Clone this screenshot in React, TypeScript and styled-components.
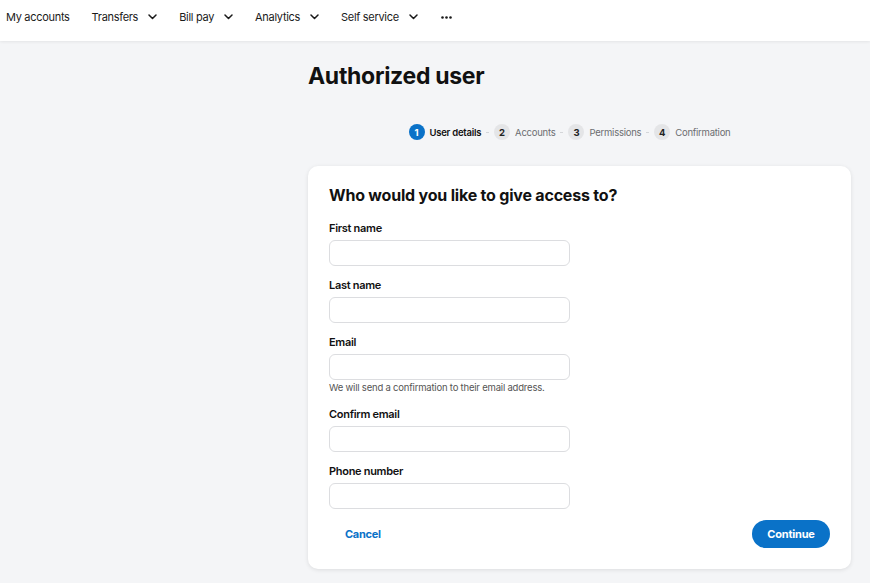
import React from "react";
import styled, { createGlobalStyle } from "styled-components";

const Global = createGlobalStyle`
  html, body { margin: 0; padding: 0; }
  body {
    background: #f4f5f7;
    font-family: Inter, "Noto Sans", sans-serif;
    color: #111;
    -webkit-font-smoothing: antialiased;
  }
  * { box-sizing: border-box; }
`;

const Page = styled.div`
  min-height: 583px;
  display: flex;
  flex-direction: column;
`;

const NavBar = styled.nav`
  height: 41px;
  background: #fff;
  display: flex;
  align-items: center;
  padding: 0 0 7px 6px;
  gap: 22px;
  box-shadow: 0 1px 3px rgba(0, 0, 0, 0.07);
`;

const NavItem = styled.div<{ $extra?: boolean }>`
  display: flex;
  align-items: center;
  gap: 10px;
  font-size: 11px;
  letter-spacing: -0.3px;
  line-height: 14px;
  color: #1a1a1a;
  margin-left: ${(p) => (p.$extra ? "1px" : "0")};
`;

const Main = styled.main`
  padding: 21px 19px 0 308px;
  display: flex;
  flex-direction: column;
`;

const Title = styled.h1`
  margin: 0;
  font-size: 23px;
  font-weight: 700;
  letter-spacing: -0.3px;
  line-height: 29px;
`;

const Stepper = styled.div`
  display: flex;
  align-items: center;
  justify-content: center;
  padding-right: 20px;
  margin-top: 33px;
  gap: 5px;
`;

const Step = styled.div`
  display: flex;
  align-items: center;
  gap: 5px;
`;

const StepDot = styled.span<{ $active?: boolean }>`
  width: 16px;
  height: 16px;
  border-radius: 50%;
  display: inline-flex;
  align-items: center;
  justify-content: center;
  font-size: 9.5px;
  font-weight: 700;
  background: ${(p) => (p.$active ? "#0a72c8" : "#e4e5e7")};
  color: ${(p) => (p.$active ? "#fff" : "#222")};
`;

const StepLabel = styled.span<{ $active?: boolean }>`
  font-size: 9.5px;
  letter-spacing: -0.25px;
  font-weight: ${(p) => (p.$active ? 600 : 400)};
  color: ${(p) => (p.$active ? "#111" : "#6b6d70")};
`;

const Dash = styled.span`
  width: 3px;
  height: 1px;
  background: #d4d6d9;
`;

const Card = styled.section`
  margin-top: 26px;
  background: #fff;
  border-radius: 10px;
  box-shadow: 0 1px 4px rgba(0, 0, 0, 0.1);
  padding: 18px 21px 21px 21px;
  display: flex;
  flex-direction: column;
`;

const CardTitle = styled.h2`
  margin: 0 0 15px;
  font-size: 16px;
  font-weight: 700;
  letter-spacing: -0.2px;
  line-height: 22px;
`;

const Field = styled.div`
  display: flex;
  flex-direction: column;
  margin-bottom: 12px;
`;

const Label = styled.label`
  font-size: 11px;
  font-weight: 600;
  letter-spacing: -0.3px;
  line-height: 14px;
  margin-bottom: 5px;
`;

const Input = styled.input`
  width: 241px;
  height: 26px;
  border: 1px solid #dcdde0;
  border-radius: 6px;
  background: #fff;
  outline: none;
  font-family: inherit;
`;

const Help = styled.div`
  font-size: 9.5px;
  letter-spacing: -0.2px;
  line-height: 12px;
  color: #555;
  margin-top: 2px;
  margin-bottom: 1px;
`;

const Actions = styled.div`
  display: flex;
  justify-content: space-between;
  align-items: center;
  margin-top: -1px;
  padding-left: 16px;
`;

const LinkButton = styled.button`
  border: 0;
  background: none;
  padding: 0;
  font-family: inherit;
  font-size: 11px;
  letter-spacing: -0.3px;
  font-weight: 700;
  color: #0a72c8;
`;

const PrimaryButton = styled.button`
  border: 0;
  height: 28px;
  width: 78px;
  padding: 0;
  border-radius: 14px;
  background: #0a72c8;
  color: #fff;
  font-family: inherit;
  font-size: 11px;
  letter-spacing: -0.2px;
  font-weight: 700;
`;

const Chevron = () => (
  <svg width="9" height="6" viewBox="0 0 9 6" fill="none" stroke="#1a1a1a" strokeWidth="1.5" strokeLinecap="round" strokeLinejoin="round">
    <path d="M1 1l3.5 3.5L8 1" />
  </svg>
);

const Dots = () => (
  <svg width="11" height="3" viewBox="0 0 11 3" fill="#1a1a1a">
    <circle cx="1.5" cy="1.5" r="1.3" />
    <circle cx="5.5" cy="1.5" r="1.3" />
    <circle cx="9.5" cy="1.5" r="1.3" />
  </svg>
);

const navItems: { label: string; menu: boolean }[] = [
  { label: "My accounts", menu: false },
  { label: "Transfers", menu: true },
  { label: "Bill pay", menu: true },
  { label: "Analytics", menu: true },
  { label: "Self service", menu: true },
];

const steps = ["User details", "Accounts", "Permissions", "Confirmation"];

const fields: { label: string; help?: string }[] = [
  { label: "First name" },
  { label: "Last name" },
  { label: "Email", help: "We will send a confirmation to their email address." },
  { label: "Confirm email" },
  { label: "Phone number" },
];

export default function App() {
  return (
    <Page>
      <Global />
      <NavBar>
        {navItems.map((n) => (
          <NavItem key={n.label}>
            {n.label}
            {n.menu && <Chevron />}
          </NavItem>
        ))}
        <NavItem $extra>
          <Dots />
        </NavItem>
      </NavBar>
      <Main>
        <Title>Authorized user</Title>
        <Stepper>
          {steps.map((s, i) => (
            <React.Fragment key={s}>
              {i > 0 && <Dash />}
              <Step>
                <StepDot $active={i === 0}>{i + 1}</StepDot>
                <StepLabel $active={i === 0}>{s}</StepLabel>
              </Step>
            </React.Fragment>
          ))}
        </Stepper>
        <Card>
          <CardTitle>Who would you like to give access to?</CardTitle>
          {fields.map((f) => (
            <Field key={f.label}>
              <Label>{f.label}</Label>
              <Input type="text" />
              {f.help && <Help>{f.help}</Help>}
            </Field>
          ))}
          <Actions>
            <LinkButton>Cancel</LinkButton>
            <PrimaryButton>Continue</PrimaryButton>
          </Actions>
        </Card>
      </Main>
    </Page>
  );
}
